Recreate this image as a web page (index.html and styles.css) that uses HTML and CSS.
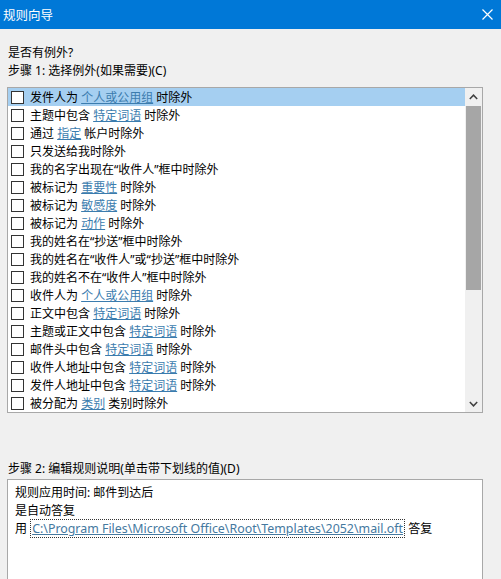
FILE: index.html
```html
<!DOCTYPE html>
<html lang="zh-CN">
<head>
  <meta charset="UTF-8" />
  <title>规则向导</title>
  <link rel="stylesheet" href="styles.css">
</head>
<body>
  <div class="titlebar">
    <span class="title">规则向导</span>
    <svg class="close" width="11" height="11" viewBox="0 0 11 11">
      <path d="M0.5 0.5 L10.5 10.5 M10.5 0.5 L0.5 10.5" stroke="#fff" stroke-width="1.2" fill="none"/>
    </svg>
  </div>

  <div class="content">
    <p class="label">是否有例外?</p>
    <p class="label">步骤 1: 选择例外(如果需要)(C)</p>

    <div class="listbox">
      <ul class="options">
        <li class="option selected"><span class="check"></span><span>发件人为 <a href="#">个人或公用组</a> 时除外</span></li>
        <li class="option"><span class="check"></span><span>主题中包含 <a href="#">特定词语</a> 时除外</span></li>
        <li class="option"><span class="check"></span><span>通过 <a href="#">指定</a> 帐户时除外</span></li>
        <li class="option"><span class="check"></span><span>只发送给我时除外</span></li>
        <li class="option"><span class="check"></span><span>我的名字出现在“收件人”框中时除外</span></li>
        <li class="option"><span class="check"></span><span>被标记为 <a href="#">重要性</a> 时除外</span></li>
        <li class="option"><span class="check"></span><span>被标记为 <a href="#">敏感度</a> 时除外</span></li>
        <li class="option"><span class="check"></span><span>被标记为 <a href="#">动作</a> 时除外</span></li>
        <li class="option"><span class="check"></span><span>我的姓名在“抄送”框中时除外</span></li>
        <li class="option"><span class="check"></span><span>我的姓名在“收件人”或“抄送”框中时除外</span></li>
        <li class="option"><span class="check"></span><span>我的姓名不在“收件人”框中时除外</span></li>
        <li class="option"><span class="check"></span><span>收件人为 <a href="#">个人或公用组</a> 时除外</span></li>
        <li class="option"><span class="check"></span><span>正文中包含 <a href="#">特定词语</a> 时除外</span></li>
        <li class="option"><span class="check"></span><span>主题或正文中包含 <a href="#">特定词语</a> 时除外</span></li>
        <li class="option"><span class="check"></span><span>邮件头中包含 <a href="#">特定词语</a> 时除外</span></li>
        <li class="option"><span class="check"></span><span>收件人地址中包含 <a href="#">特定词语</a> 时除外</span></li>
        <li class="option"><span class="check"></span><span>发件人地址中包含 <a href="#">特定词语</a> 时除外</span></li>
        <li class="option"><span class="check"></span><span>被分配为 <a href="#">类别</a> 类别时除外</span></li>
      </ul>
      <div class="scrollbar">
        <div class="arrow">
          <svg width="9" height="6" viewBox="0 0 9 6"><path d="M0.8 5 L4.5 1.2 L8.2 5" stroke="#404040" stroke-width="1.5" fill="none"/></svg>
        </div>
        <div class="track"><div class="thumb"></div></div>
        <div class="arrow">
          <svg width="9" height="6" viewBox="0 0 9 6"><path d="M0.8 1 L4.5 4.8 L8.2 1" stroke="#404040" stroke-width="1.5" fill="none"/></svg>
        </div>
      </div>
    </div>

    <p class="label step2">步骤 2: 编辑规则说明(单击带下划线的值)(D)</p>
    <div class="description">
      <p>规则应用时间: 邮件到达后</p>
      <p>是自动答复</p>
      <p>用 <a href="#" class="path">C:\Program Files\Microsoft Office\Root\Templates\2052\mail.oft</a> 答复</p>
    </div>
  </div>
</body>
</html>
```

FILE: styles.css
```css
* {
  margin: 0;
  padding: 0;
  box-sizing: border-box;
}

body {
  background: #f0f0f0;
  font-family: 'Noto Sans', 'Noto Sans CJK SC', sans-serif;
  font-size: 12px;
  color: #000;
  overflow: hidden;
}

.titlebar {
  height: 29px;
  background-color: #0078d7;
  color: white;
  display: flex;
  justify-content: space-between;
  align-items: center;
  padding: 0 8px 0 3px;
}

.title {
  font-size: 12.5px;
  font-family: 'Noto Sans CJK SC', sans-serif;
}

.content {
  padding: 15px 18px 0 7px;
}

.label {
  line-height: 18px;
  padding-left: 1px;
}

.listbox {
  margin-top: 7px;
  height: 326px;
  border: 1px solid #a8a8a8;
  background: white;
  display: flex;
}

.options {
  list-style: none;
  flex: 1;
}

.option {
  height: 18px;
  display: flex;
  align-items: center;
  gap: 6px;
  padding-left: 3px;
  white-space: nowrap;
}

.option.selected {
  background-color: #a5cff1;
}

.check {
  width: 13px;
  height: 13px;
  border: 1px solid #333;
  background: white;
  flex-shrink: 0;
}

a {
  color: #3b7cae;
  text-decoration: underline;
}

.scrollbar {
  width: 17px;
  background: #f0f0f0;
  display: flex;
  flex-direction: column;
}

.arrow {
  height: 17px;
  display: flex;
  align-items: center;
  justify-content: center;
}

.track {
  flex: 1;
  padding: 1px 1px 0 1px;
}

.thumb {
  height: 184px;
  background: #a6a6a6;
}

.step2 {
  margin-top: 47px;
}

.description {
  margin-top: 1px;
  height: 110px;
  border: 1px solid #a8a8a8;
  background: white;
  padding: 4px 7px;
}

.description p {
  line-height: 18px;
}

.path {
  font-size: 12.4px;
  color: #45799f;
  border: 1px dotted #333;
  padding: 0 1px;
}
```
